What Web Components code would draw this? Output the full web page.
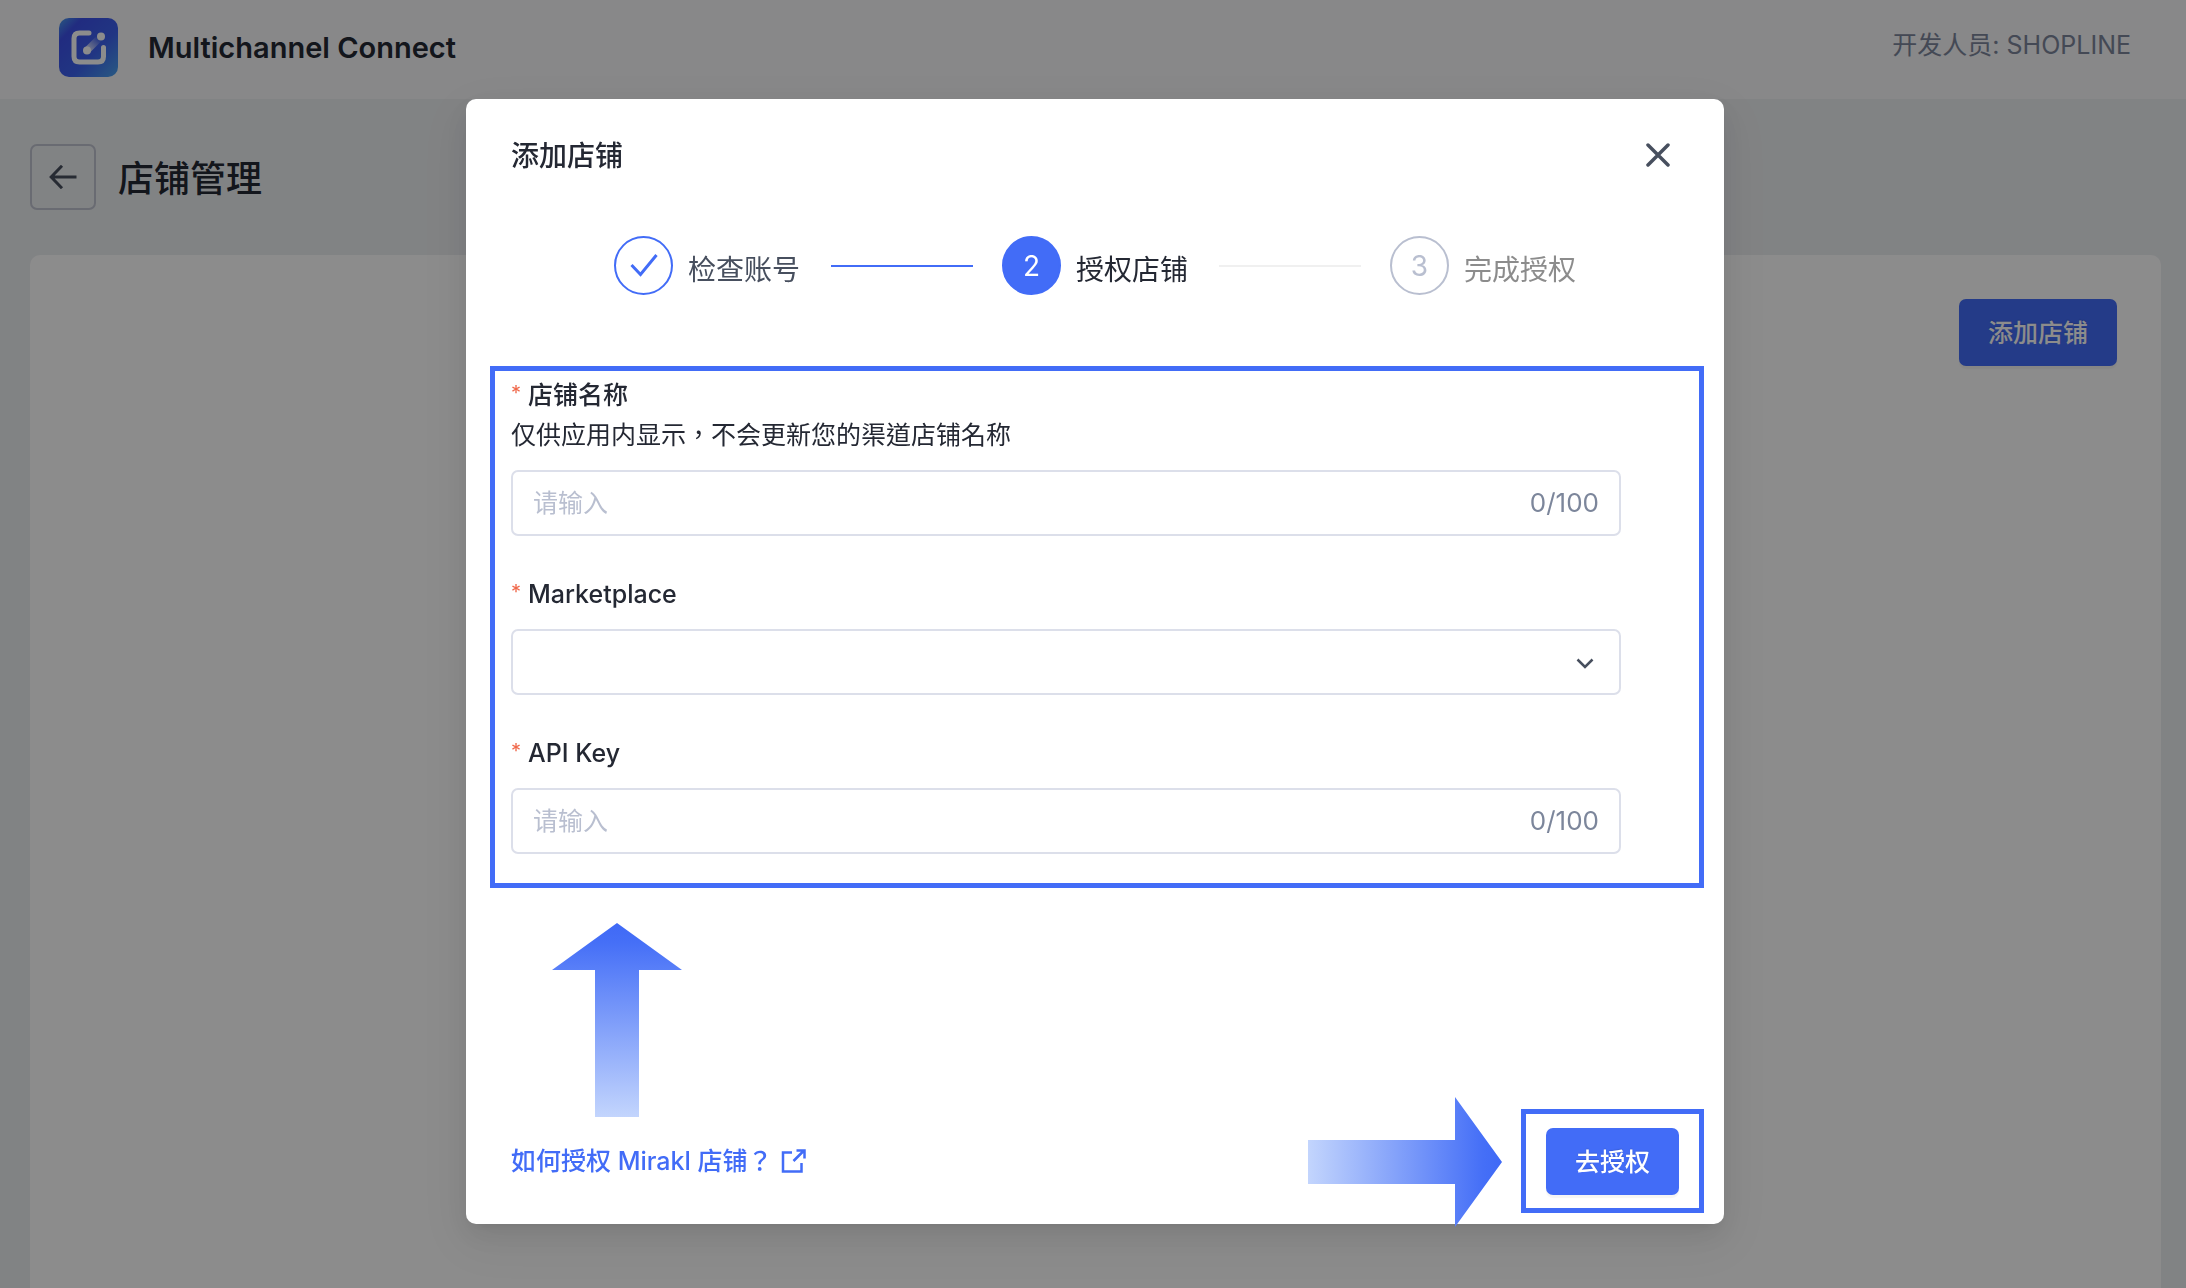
<!DOCTYPE html>
<html lang="zh-CN">
<head>
<meta charset="utf-8">
<title>Multichannel Connect</title>
<style>
  :root {
    --blue: #426cf7;
    --ink: #242833;
    --ink-2: #474f5e;
    --muted: #7c869b;
    --faint: #b9bfd0;
    --line: #dcdfea;
    --danger: #f0684a;
    --text: 25px;
    --text-lg: 28px;
    --field: 66px;
    --tc: Inter, "Noto Sans CJK TC", sans-serif;
  }
  body {
    margin: 0;
    font-family: Inter, "Noto Sans CJK SC", sans-serif;
    font-size: var(--text);
    line-height: 40px;
    color: var(--ink);
    background: #eceef1;
  }
</style>
</head>
<body>
<connect-app></connect-app>

<script>
const define = (name, html, setup) => {
  const template = document.createElement('template');
  template.innerHTML = '<style>*{box-sizing:border-box}:host{box-sizing:border-box}button,input,select{font:inherit;color:inherit;margin:0}svg{display:block;flex:none}</style>' + html;
  customElements.define(name, class extends HTMLElement {
    constructor() {
      super();
      this.attachShadow({ mode: 'open' }).append(template.content.cloneNode(true));
    }
    connectedCallback() {
      if (setup) setup(this, this.shadowRoot);
    }
  });
};

define('primary-button', `
  <style>
    :host { display: block; flex: none; }
    button {
      display: block; height: 67px; padding: 0 29px; border: 0; border-radius: 7px;
      background: var(--blue); color: #fff; font-weight: 500; white-space: nowrap;
      box-shadow: 0 3px 1px rgba(0,0,0,.04); text-shadow: 0 -1px 1px rgba(0,0,0,.12);
    }
  </style>
  <button type="button"><slot></slot></button>
`);

define('app-logo', `
  <style>:host { display: block; flex: none; }</style>
  <svg width="59" height="59" viewBox="0 0 59 59" fill="none">
    <defs>
      <linearGradient id="g" x1="0" y1="0" x2="1" y2="1">
        <stop offset="0" stop-color="#4aa0ec"/><stop offset=".2" stop-color="#3d50ea"/>
        <stop offset=".6" stop-color="#3c62ee"/><stop offset="1" stop-color="#4aa4ee"/>
      </linearGradient>
      <linearGradient id="t" gradientUnits="userSpaceOnUse" x1="28" y1="33" x2="40" y2="20">
        <stop offset="0" stop-color="#fff" stop-opacity=".9"/><stop offset="1" stop-color="#fff" stop-opacity="0"/>
      </linearGradient>
    </defs>
    <rect width="59" height="59" rx="10" fill="url(#g)"/>
    <path d="M30 15H20.500Q15 15 15 20.500V38.500Q15 44 20.500 44H39Q44.500 44 44.500 38.500V29.500" stroke="#fff" stroke-width="5" stroke-linecap="round"/>
    <path d="M28 32.500 40 20.500" stroke="url(#t)" stroke-width="7"/>
    <circle cx="28" cy="32.500" r="4" fill="#fff"/>
    <circle cx="42" cy="18.500" r="4" fill="#fff"/>
  </svg>
`);

define('app-header', `
  <style>
    :host {
      display: flex; align-items: center; height: 99px; padding: 0 55px 4px 59px;
      background: #f7f7fa;
    }
    h1 { flex: 1; margin: 0 0 0 30px; font-size: 29px; font-weight: 600; }
    .dev { color: var(--muted); padding-bottom: 6px; }
  </style>
  <app-logo></app-logo>
  <h1><slot></slot></h1>
  <span class="dev"><slot name="developer"></slot></span>
`);

define('page-heading', `
  <style>
    :host { display: flex; align-items: center; gap: 22px; padding: 45px 30px; }
    button {
      display: grid; place-items: center; width: 66px; height: 66px; padding: 0;
      border: 2px solid #bfc3cf; border-radius: 7px; background: none; color: var(--ink-2);
    }
    h2 { margin: 0; padding-top: 4px; font-size: 36px; font-weight: 500; }
  </style>
  <button type="button" aria-label="返回">
    <svg width="28" height="24" viewBox="0 0 28 24" fill="none" stroke="currentColor" stroke-width="3">
      <path d="M27.500 12H2.500M13 .800 2.200 12 13 23.200"/>
    </svg>
  </button>
  <h2><slot></slot></h2>
`);

define('store-panel', `
  <style>
    :host {
      display: flex; flex: 1; justify-content: flex-end; align-items: flex-start;
      margin: 0 25px 0 30px; padding: 44px; border-radius: 10px 10px 0 0; background: #fff;
    }
  </style>
  <slot></slot>
`);

define('step-item', `
  <style>
    :host { display: flex; align-items: center; gap: 15px; flex: none; font-size: var(--text-lg); color: #8c8c8c; }
    .dot {
      display: grid; place-items: center; width: 59px; height: 59px;
      border: 2px solid var(--faint); border-radius: 50%; color: var(--faint);
    }
    .name { padding-top: 8px; }
    .check { display: none; }
    :host([state=done]) { color: var(--ink-2); }
    :host([state=done]) .dot { border-color: var(--blue); color: var(--blue); }
    :host([state=done]) .check { display: block; }
    :host([state=active]) { color: var(--ink); }
    :host([state=active]) .dot { border-color: var(--blue); background: var(--blue); color: #fff; }
  </style>
  <span class="dot">
    <slot name="number"></slot>
    <svg class="check" width="28" height="24" viewBox="0 0 28 24" fill="none" stroke="currentColor" stroke-width="3">
      <path d="M1.500 11 10.500 20.500 26.500 1"/>
    </svg>
  </span>
  <span class="name"><slot></slot></span>
`);

define('step-line', `
  <style>
    :host { display: block; flex: 1; height: 2px; margin: 0 29px 0 31px; background: #f0f0f0; }
    :host([done]) { background: var(--blue); }
  </style>
`);

define('step-list', `
  <style>:host { display: flex; align-items: center; padding: 23px 128px 71px 124px; }</style>
  <slot></slot>
`);

define('form-field', `
  <style>
    :host { display: block; }
    label { display: flex; gap: 8px; font-weight: 500; }
    label::before {
      content: "*"; width: 9px; color: var(--danger); font-size: 20px; font-weight: 400;
      line-height: 36px; text-align: center;
    }
    .help { font-family: var(--tc); }
    .box {
      display: flex; align-items: center; height: var(--field); margin-top: 15px;
      border: 2px solid var(--line); border-radius: 7px; background: #fff;
    }
    input, select {
      flex: 1; min-width: 0; height: 100%; padding: 0 20px; border: 0; outline: 0;
      background: none; appearance: none;
    }
    input::placeholder { color: var(--faint); opacity: 1; }
    .count { padding-right: 20px; color: var(--muted); font-size: 26px; }
    svg { margin: 3px 25px 0 0; color: var(--ink-2); }
  </style>
  <label for="control"><slot></slot></label>
  <div class="help"><slot name="help"></slot></div>
  <div class="box"></div>
`, (host, root) => {
  const box = root.querySelector('.box');
  box.innerHTML = host.hasAttribute('select')
    ? `<select id="control"><option value=""></option></select>
       <svg width="18" height="12" viewBox="0 0 18 12" fill="none" stroke="currentColor" stroke-width="2.500"><path d="M1.500 1.500 9 9 16.500 1.500"/></svg>`
    : `<input id="control" type="text" maxlength="100" placeholder="请输入"><span class="count">0/100</span>`;
  const input = box.querySelector('input');
  if (input) input.addEventListener('input', () => {
    box.querySelector('.count').textContent = input.value.length + '/100';
  });
});

define('highlight-frame', `
  <style>:host { display: flex; border: 5px solid var(--blue); }</style>
  <slot></slot>
`);

define('guide-arrow', `
  <style>
    :host { display: block; position: absolute; }
    :host([direction=right]) svg { transform: rotate(90deg); }
  </style>
  <svg width="130" height="194" viewBox="0 0 130 194">
    <defs>
      <linearGradient id="g" x1="0" y1="0" x2="0" y2="1">
        <stop offset="0" stop-color="#3f69f6"/><stop offset=".1" stop-color="#456ff7"/><stop offset="1" stop-color="#c3d5fd"/>
      </linearGradient>
    </defs>
    <path d="M65 0 130 47H87V194H43V47H0Z" fill="url(#g)"/>
  </svg>
`);

define('help-link', `
  <style>
    :host { display: block; }
    a { display: flex; align-items: center; gap: 9px; color: var(--blue); font-family: var(--tc); font-weight: 500; text-decoration: none; }
  </style>
  <a href="#"><span><slot></slot></span>
    <svg width="25" height="24" viewBox="0 0 25 24" fill="none" stroke="currentColor" stroke-width="2.500">
      <path d="M11 3.500H2V22.500H20.500V14M12.500 12 23 1.500M15.500 1.500H23.500V9.500"/>
    </svg>
  </a>
`);

define('add-store-dialog', `
  <style>
    :host {
      position: fixed; inset: 0; overflow: hidden; display: flex; justify-content: center; align-items: flex-start;
      padding: 99px 0 0 4px; background: rgba(0,0,0,.45);
    }
    section {
      position: relative; width: 1258px; max-width: 100%; padding: 0 20px 11px 24px; border-radius: 10px; background: #fff;
      box-shadow: 0 16px 49px 14px rgba(0,0,0,.05), 0 11px 28px rgba(0,0,0,.08), 0 5px 11px -7px rgba(0,0,0,.12);
    }
    header { display: flex; align-items: center; justify-content: space-between; height: 114px; padding: 0 34px 0 21px; }
    h2 { margin: 0; font-size: var(--text-lg); font-weight: 500; }
    .close { padding: 0 0 3px; border: 0; background: none; color: var(--ink-2); }
    .fields { flex-direction: column; gap: 38px; padding: 4px 78px 29px 16px; }
    footer { display: flex; align-items: center; justify-content: space-between; margin-top: 221px; padding-left: 21px; }
    .submit { padding: 14px 20px 13px; }
    .up { left: 86px; bottom: 107px; }
    .right { right: 254px; bottom: -35px; }
  </style>
  <section role="dialog" aria-modal="true" aria-labelledby="title">
    <header>
      <h2 id="title">添加店铺</h2>
      <button class="close" type="button" aria-label="关闭">
        <svg width="24" height="24" viewBox="0 0 24 24" fill="none" stroke="currentColor" stroke-width="3.500" stroke-linecap="round"><path d="M2 2 22 22M22 2 2 22"/></svg>
      </button>
    </header>
    <step-list>
      <step-item state="done">检查账号</step-item>
      <step-line done></step-line>
      <step-item state="active"><span slot="number">2</span>授权店铺</step-item>
      <step-line></step-line>
      <step-item><span slot="number">3</span>完成授权</step-item>
    </step-list>
    <highlight-frame class="fields">
      <form-field>店铺名称<span slot="help" lang="zh-TW">仅供应用内显示，不会更新您的渠道店铺名称</span></form-field>
      <form-field select>Marketplace</form-field>
      <form-field>API Key</form-field>
    </highlight-frame>
    <footer>
      <help-link lang="zh-TW">如何授权 Mirakl 店铺？</help-link>
      <highlight-frame class="submit"><primary-button>去授权</primary-button></highlight-frame>
    </footer>
    <guide-arrow class="up"></guide-arrow>
    <guide-arrow class="right" direction="right"></guide-arrow>
  </section>
`);

define('connect-app', `
  <style>:host { display: flex; flex-direction: column; min-height: 100vh; }</style>
  <app-header>Multichannel Connect<span slot="developer">开发人员: SHOPLINE</span></app-header>
  <page-heading>店铺管理</page-heading>
  <store-panel><primary-button>添加店铺</primary-button></store-panel>
  <add-store-dialog></add-store-dialog>
`);
</script>
</body>
</html>
